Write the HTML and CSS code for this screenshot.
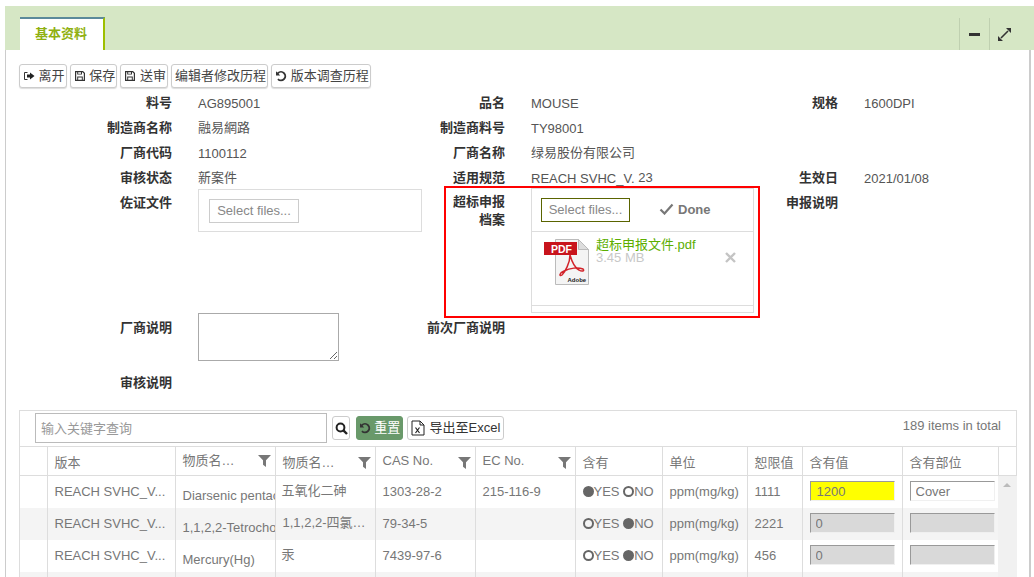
FILE: index.html
```html
<!DOCTYPE html>
<html lang="zh">
<head>
<meta charset="utf-8">
<title>基本资料</title>
<link rel="stylesheet" href="styles.css">
</head>
<body>
<svg class="defs" width="0" height="0" aria-hidden="true">
  <symbol id="i-filter" viewBox="0 0 14 14"><path d="M0 1h14L8.6 6.8V14L5.4 11.5V6.8z"/></symbol>
  <symbol id="i-save" viewBox="0 0 12 12"><path fill-rule="evenodd" d="M1 1h8l2 2v8H1zM2.2 2.2v7.6h1V6.4h5.6v3.4h1V3.5L8.5 2.2H8V4.6H3.2V2.2zM4.2 2.2v1.6h2.8V2.2zM4.2 7.4v2.4h3.6V7.4z"/></symbol>
  <symbol id="i-undo" viewBox="0 0 12 12"><path d="M1 1.2v4.2h4.2L3.6 3.8A3.3 3.3 0 1 1 3.6 8.4L2.3 9.8A5.2 5.2 0 1 0 2.3 2.5z"/></symbol>
</svg>
<main class="panel">
  <header class="panel-head">
    <div class="tab">基本资料</div>
    <div class="head-tools">
      <span class="head-tool"><span class="minus"></span></span>
      <span class="head-tool">
        <svg width="13" height="13" viewBox="0 0 13 13"><path fill="#333" d="M8 0h5v5zM0 13V8l5 5z"/><path stroke="#333" stroke-width="1.6" d="M3 10l7-7"/></svg>
      </span>
    </div>
  </header>
  <div class="panel-body">
    <div class="actions">
      <button class="btn" type="button">
        <svg class="ico" width="12" height="12" viewBox="0 0 12 12"><path fill="none" stroke="#333" d="M4.5 2.5H1.5v7h3"/><path fill="#222" d="M4 4.5h3V2.5L11.5 6 7 9.5v-2H4z"/></svg>离开
      </button>
      <button class="btn" type="button"><svg class="ico" width="12" height="12"><use href="#i-save"/></svg>保存</button>
      <button class="btn" type="button"><svg class="ico" width="12" height="12"><use href="#i-save"/></svg>送审</button>
      <button class="btn" type="button">编辑者修改历程</button>
      <button class="btn" type="button"><svg class="ico" width="12" height="12"><use href="#i-undo"/></svg>版本调查历程</button>
    </div>

    <div class="form">
      <div class="lbl">料号</div><div class="val">AG895001</div>
      <div class="lbl">品名</div><div class="val">MOUSE</div>
      <div class="lbl">规格</div><div class="val">1600DPI</div>

      <div class="lbl">制造商名称</div><div class="val cn">融易網路</div>
      <div class="lbl">制造商料号</div><div class="val">TY98001</div>
      <div class="lbl"></div><div class="val"></div>

      <div class="lbl">厂商代码</div><div class="val">1100112</div>
      <div class="lbl">厂商名称</div><div class="val cn">绿易股份有限公司</div>
      <div class="lbl"></div><div class="val"></div>

      <div class="lbl">审核状态</div><div class="val cn">新案件</div>
      <div class="lbl">适用规范</div><div class="val">REACH SVHC_V. <span class="ver">23</span></div>
      <div class="lbl">生效日</div><div class="val">2021/01/08</div>

      <div class="lbl">佐证文件</div>
      <div class="val val-box"><div class="upload-simple"><span class="select-btn">Select files...</span></div></div>
      <div class="lbl lbl-wrap">超标申报<br>档案</div>
      <div class="val val-box">
        <div class="upload">
          <div class="upload-top">
            <span class="select-btn select-active">Select files...</span>
            <span class="done">
              <svg width="15" height="12" viewBox="0 0 15 12"><path fill="none" stroke="#777" stroke-width="2.2" d="M1.5 6.5l4 4 8-9"/></svg>Done
            </span>
          </div>
          <div class="upload-list">
            <svg class="pdf" width="46" height="48" viewBox="0 0 46 48">
              <path fill="#f4f4f4" stroke="#bbb" d="M11.5 .5h23l10 10v35h-33z"/>
              <path fill="#ddd" stroke="#bbb" d="M34.5 .5v10h10z"/>
              <rect x="0" y="3" width="33" height="13" fill="#c8141c"/>
              <text x="7" y="13.5" class="pdf-t">PDF</text>
              <path fill="none" stroke="#d2232a" stroke-width="1.5" d="M26 16c0 8-5 17-8 20-3 2-3-2 2-4 6-3 14-4 19-2 2 2-1 3-4 1-4-2-7-8-9-15"/>
              <text x="23.5" y="43" class="pdf-a">Adobe</text>
            </svg>
            <div class="file-info">
              <div class="file-name">超标申报文件.pdf</div>
              <div class="file-size">3.45 MB</div>
            </div>
            <svg class="file-x" width="11" height="11" viewBox="0 0 11 11"><path stroke="#c4c4c4" stroke-width="2.4" d="M1 1l9 9M10 1l-9 9"/></svg>
          </div>
          <div class="upload-foot"></div>
        </div>
        <div class="redbox"></div>
      </div>
      <div class="lbl">申报说明</div><div class="val"></div>

      <div class="lbl lbl-low">厂商说明</div>
      <div class="val val-box"><textarea class="note"></textarea></div>
      <div class="lbl lbl-low">前次厂商说明</div><div class="val"></div>
      <div class="lbl"></div><div class="val"></div>

      <div class="lbl">审核说明</div><div class="val"></div>
      <div class="lbl"></div><div class="val"></div>
      <div class="lbl"></div><div class="val"></div>
    </div>

    <section class="grid">
      <div class="grid-tools">
        <input class="search" type="text" placeholder="输入关键字查询">
        <button class="tbtn tbtn-search" type="button">
          <svg width="13" height="13" viewBox="0 0 13 13"><circle cx="5.5" cy="5.5" r="3.9" fill="none" stroke="#222" stroke-width="2"/><path stroke="#222" stroke-width="2.4" d="M8.4 8.4l3.6 3.6"/></svg>
        </button>
        <button class="tbtn tbtn-reset" type="button"><svg class="ico" width="12" height="12" fill="#fff"><use href="#i-undo"/></svg>重置</button>
        <button class="tbtn tbtn-excel" type="button">
          <svg class="ico-x" width="14" height="16" viewBox="0 0 14 16"><path fill="#fff" stroke="#222" d="M1 1h8l4 4v10H1z"/><path fill="none" stroke="#222" d="M9 1v4h4"/><path stroke="#222" stroke-width="1.2" d="M4.5 7.5l4 5.5M8.5 7.5l-4 5.5"/></svg>导出至Excel
        </button>
        <span class="total">189 items in total</span>
      </div>
      <div class="grid-main">
        <table class="tbl">
          <colgroup>
            <col class="c0"><col class="c1"><col class="c2"><col class="c2"><col class="c2"><col class="c2">
            <col class="c5"><col class="c6"><col class="c7"><col class="c2"><col class="c8"><col class="c9">
          </colgroup>
          <thead>
            <tr>
              <th></th>
              <th><span class="th-low">版本</span></th>
              <th><span class="th-f">物质名…</span><svg class="flt"><use href="#i-filter"/></svg></th>
              <th><span class="th-low">物质名…</span><svg class="flt flt-low"><use href="#i-filter"/></svg></th>
              <th><span class="th-f">CAS No.</span><svg class="flt flt-low"><use href="#i-filter"/></svg></th>
              <th><span class="th-f">EC No.</span><svg class="flt flt-low"><use href="#i-filter"/></svg></th>
              <th><span class="th-low">含有</span></th>
              <th><span class="th-low">单位</span></th>
              <th><span class="th-low">恕限值</span></th>
              <th><span class="th-low">含有值</span></th>
              <th><span class="th-low">含有部位</span></th>
              <th></th>
            </tr>
          </thead>
          <tbody>
            <tr>
              <td></td><td class="ell">REACH SVHC_V...</td><td class="clip low">Diarsenic pentaoxide</td><td class="ell up">五氧化二砷</td>
              <td>1303-28-2</td><td>215-116-9</td>
              <td><span class="r on"></span>YES <span class="r"></span>NO</td>
              <td>ppm(mg/kg)</td><td>1111</td>
              <td><input class="cell-in hot" type="text" value="1200"></td>
              <td><input class="cell-in" type="text" value="Cover"></td><td class="bar"></td>
            </tr>
            <tr class="alt">
              <td></td><td class="ell">REACH SVHC_V...</td><td class="clip low">1,1,2,2-Tetrochoroethane</td><td class="ell pad-in">1,1,2,2-四氯乙烷</td>
              <td>79-34-5</td><td></td>
              <td><span class="r"></span>YES <span class="r on"></span>NO</td>
              <td>ppm(mg/kg)</td><td>2221</td>
              <td><input class="cell-in off" type="text" value="0" disabled></td>
              <td><input class="cell-in off" type="text" disabled></td><td class="bar"></td>
            </tr>
            <tr>
              <td></td><td class="ell">REACH SVHC_V...</td><td class="clip low">Mercury(Hg)</td><td class="ell up">汞</td>
              <td>7439-97-6</td><td></td>
              <td><span class="r"></span>YES <span class="r on"></span>NO</td>
              <td>ppm(mg/kg)</td><td>456</td>
              <td><input class="cell-in off" type="text" value="0" disabled></td>
              <td><input class="cell-in off" type="text" disabled></td><td class="bar"></td>
            </tr>
            <tr class="alt">
              <td></td><td></td><td></td><td></td><td></td><td></td><td></td><td></td><td></td><td></td><td></td><td class="bar"></td>
            </tr>
          </tbody>
        </table>
        <span class="scroll-up"></span>
      </div>
    </section>
  </div>
</main>
</body>
</html>
```

FILE: styles.css
```css
* { box-sizing: border-box; }
html, body { height: 577px; overflow: hidden; }
body {
  margin: 0;
  padding: 6px 0 0 5px;
  background: #fff;
  color: #555;
  font: 13px/25px "Liberation Sans", "Noto Sans CJK SC", sans-serif;
}
.defs { position: absolute; }

.panel-head {
  height: 44px;
  background: #d6e7c5;
  display: flex;
  justify-content: space-between;
  align-items: flex-end;
  padding-left: 15px;
}
.tab {
  width: 85px;
  height: 33px;
  padding: 3px 0 0 15px;
  background: #fff;
  border-top: 2px solid #5b8a9a;
  border-right: 2px solid #9dbf00;
  color: #8fb010;
  font-weight: 700;
  line-height: 24px;
}
.head-tools { display: flex; height: 32px; margin-right: 15px; }
.head-tool {
  width: 30px;
  border-left: 1px solid #bfd0b0;
  display: flex;
  align-items: center;
  justify-content: center;
}
.minus { width: 11px; height: 3px; background: #333; margin-top: 1px; }

.panel-body {
  width: 1026px;
  height: 527px;
  border-left: 1px solid #ccc;
  border-right: 2px solid #ccc;
  padding: 14px 13px 0 13px;
}

.actions { display: flex; gap: 3.2px; height: 24px; }
.btn {
  height: 24px;
  padding: 0 1px 0 3px;
  display: flex;
  align-items: center;
  background: #fff;
  border: 1px solid #ccc;
  border-radius: 3px;
  color: #444;
  font: inherit;
  line-height: 20px;
  box-shadow: 0 1px 1px #ddd;
}
.ico { margin-right: 3.5px; fill: #333; flex: none; }

.form {
  display: grid;
  grid-template-columns: 153px 250px 83px 249px 84px 179px;
  grid-template-rows: 25px 25px 25px 25px 122px 58px 24px;
  margin-top: 3px;
  height: 304px;
}
.lbl { text-align: right; color: #333; font-weight: 700; margin-top: -1px; }
.val { padding-left: 26px; white-space: nowrap; }
.cn { margin-top: -1px; }
.ver { display: inline-block; transform: translateY(-1px); }
.val-box { position: relative; }
.lbl-wrap { line-height: 18px; padding-top: 3px; }
.lbl-low { padding-top: 3px; }

.upload-simple {
  width: 224px;
  height: 43px;
  margin-top: -2px;
  padding: 9px 0 0 10px;
  border: 1px solid #ddd;
}
.select-btn {
  display: block;
  width: 90px;
  height: 24px;
  border: 1px solid #ccc;
  color: #888;
  text-align: center;
  line-height: 22px;
}
.upload {
  width: 223px;
  height: 125px;
  margin-top: -3px;
  border: 1px solid #ddd;
  display: flex;
  flex-direction: column;
}
.upload-top {
  height: 43px;
  padding: 9px 0 0 9px;
  display: flex;
  border-bottom: 1px solid #ddd;
}
.select-active { width: 89px; border-color: #5a6400; }
.done {
  margin-left: 29px;
  display: flex;
  align-items: center;
  height: 22px;
  gap: 4px;
  color: #777;
  font-weight: 700;
}
.upload-list {
  height: 74px;
  padding: 3px 0 0 12px;
  display: flex;
  position: relative;
  border-bottom: 1px solid #ddd;
}
.pdf { flex: none; margin-top: 4px; }
.pdf-t { font: 700 10.5px "Liberation Sans", sans-serif; fill: #fff; }
.pdf-a { font: 700 6px "Liberation Sans", sans-serif; fill: #222; }
.file-info { margin-left: 6px; line-height: 14px; }
.file-name { color: #5cae00; margin-top: 3px; }
.file-size { color: #c8c8c8; font-size: 13px; line-height: 12px; }
.file-x { position: absolute; left: 193px; top: 20px; }
.redbox {
  position: absolute;
  left: -61px;
  top: -5px;
  width: 316px;
  height: 132px;
  border: 2px solid #f00;
  pointer-events: none;
}

.note {
  display: block;
  width: 141px;
  height: 48px;
  margin: 0;
  border: 1px solid #aaa;
  background: #fff;
}

.grid {
  margin-top: 15px;
  width: 998px;
  border: 1px solid #ddd;
  border-bottom: 0;
}
.grid-tools {
  height: 35px;
  padding: 2px 15px 0 15px;
  display: flex;
  align-items: flex-start;
}
.search {
  width: 292px;
  height: 30px;
  padding: 0 5px;
  border: 1px solid #bbb;
  color: #888;
  font: inherit;
}
.search::placeholder { color: #999; opacity: 1; }
.tbtn {
  height: 24px;
  margin-top: 3px;
  padding: 0;
  display: flex;
  align-items: center;
  justify-content: center;
  background: #fff;
  border: 1px solid #ccc;
  border-radius: 3px;
  color: #333;
  font: inherit;
  line-height: 20px;
}
.tbtn-search { width: 18px; margin-left: 5px; }
.tbtn-reset { width: 47px; margin-left: 6px; background: #69996a; border-color: #69996a; color: #fff; }
.tbtn-excel { width: 97px; margin-left: 4px; }
.ico-x { margin-right: 5px; }
.total { margin-left: auto; color: #777; line-height: 24px; margin-top: 1px; }

.grid-main { position: relative; }
.tbl {
  width: 997px;
  table-layout: fixed;
  border-collapse: collapse;
  border-top: 1px solid #ddd;
  color: #777;
}
.c0 { width: 27px; }
.c1 { width: 128px; }
.c2 { width: 100px; }
.c5 { width: 87px; }
.c6 { width: 85px; }
.c7 { width: 55px; }
.c8 { width: 96px; }
.c9 { width: 19px; }
th {
  height: 29px;
  padding: 0 7px;
  position: relative;
  border-left: 1px solid #ddd;
  border-bottom: 1px solid #ddd;
  font-weight: 400;
  text-align: left;
  white-space: nowrap;
  overflow: hidden;
}
th:first-child, td:first-child { border-left: 0; }
.th-low { display: block; line-height: 20px; margin-top: 4px; }
.th-f { display: block; line-height: 20px; }
.flt {
  position: absolute;
  right: 4px;
  top: 7px;
  width: 13px;
  height: 13px;
  fill: #777;
}
.flt-low { top: 9px; }
td {
  height: 32px;
  padding: 0 7px 2px;
  border-left: 1px solid #ddd;
  white-space: nowrap;
  overflow: hidden;
}
.alt td { background: #f4f4f4; }
.ell { text-overflow: clip; }
.clip { padding-top: 8px; padding-bottom: 0; }
.low { line-height: 24px; }
.up { padding-left: 6px; padding-bottom: 3px; }
.pad-in { padding-bottom: 3px; text-overflow: ellipsis; }
td.bar { background: #f1f1f1; padding: 0; border-left: 0; }
.r {
  display: inline-block;
  width: 11px;
  height: 11px;
  border-radius: 50%;
  border: 2px solid #666;
  vertical-align: -1px;
}
.r.on { background: #666; }
.cell-in {
  display: block;
  width: 85px;
  height: 20px;
  padding: 0 5px;
  border: 1px solid #f0f0f0;
  border-top-color: #999;
  border-left-color: #999;
  background: #fff;
  color: #777;
  font: inherit;
}
.cell-in.hot { background: #ff0; padding-left: 6px; }
.cell-in.off { background: #d9d9d9; }
.scroll-up {
  position: absolute;
  right: 5px;
  top: 37px;
  width: 0;
  height: 0;
  border: 4px solid transparent;
  border-top: 0;
  border-bottom: 4px solid #bbb;
}
```
